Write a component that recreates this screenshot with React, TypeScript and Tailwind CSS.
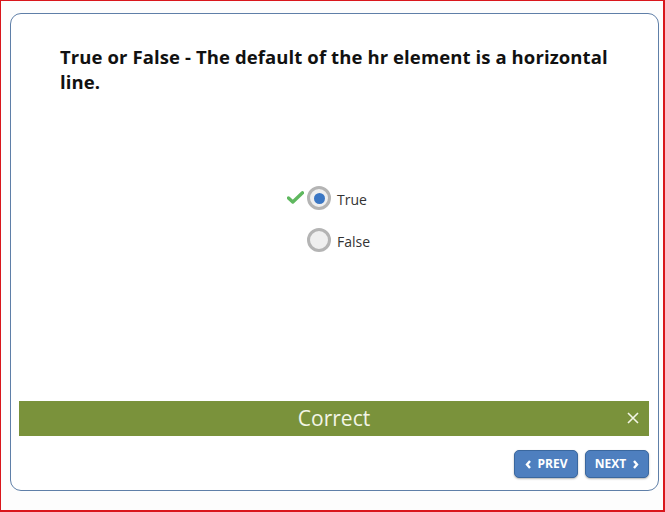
import React, { useState } from 'react';

const Chevron = ({ dir }: { dir: 'left' | 'right' }) => (
  <svg width="7" height="9" viewBox="0 0 7 9" className="inline-block">
    {dir === 'left' ? (
      <path d="M5 1 L2 4.5 L5 8" fill="none" stroke="white" strokeWidth="2.4" />
    ) : (
      <path d="M2 1 L5 4.5 L2 8" fill="none" stroke="white" strokeWidth="2.4" />
    )}
  </svg>
);

const Radio = ({ checked }: { checked: boolean }) => (
  <span className="w-[24px] h-[24px] rounded-full border-[3px] border-[#b4b4b4] bg-[#efefef] flex items-center justify-center">
    {checked && <span className="w-[11px] h-[11px] rounded-full bg-[#3b77c4]" />}
  </span>
);

const App: React.FC = () => {
  const [answer] = useState<'true' | 'false'>('true');

  return (
    <div
      className="w-[665px] h-[512px] bg-[#fdfdfd] border-t border-l border-r-2 border-b-2 border-[#d9161c] pt-[12px] pl-[9px]"
      style={{ fontFamily: '"Open Sans", sans-serif' }}
    >
      <div className="w-[649px] h-[478px] bg-white border border-[#5f7fa8] rounded-[11px] flex flex-col">
        <h1 className="pl-[49px] pr-[36px] pt-[30px] text-[18.5px] leading-[25px] font-bold text-[#111] tracking-[0.1px]">
          True or False - The default of the hr element is a horizontal line.
        </h1>

        <div className="mt-[92px] flex flex-col items-start pl-[296px] gap-[18px]">
          <div className="flex items-center h-[24px]">
            <svg width="17" height="13" viewBox="0 0 17 13" className="-ml-[20px] mr-[3px] -mt-[2px]">
              <path d="M1.5 7 L5.8 11 L15.5 1.8" fill="none" stroke="#5fb85f" strokeWidth="3.4" strokeLinecap="round" strokeLinejoin="round" />
            </svg>
            <Radio checked={answer === 'true'} />
            <span className="ml-[6px] text-[14px] text-[#333] mt-[2px]">True</span>
          </div>
          <div className="flex items-center h-[24px]">
            <Radio checked={false} />
            <span className="ml-[6px] text-[14px] text-[#333] mt-[2px]">False</span>
          </div>
        </div>

        <div className="mt-auto ml-[8px] mr-[9px] h-[35px] bg-[#7a923b] relative flex items-center justify-center">
          <span className="text-[21px] text-[#f3f5e6]">Correct</span>
          <svg width="12" height="12" viewBox="0 0 12 12" className="absolute right-[10px] top-[11px]">
            <path d="M1 1 L11 11 M11 1 L1 11" stroke="#f3f5e6" strokeWidth="1.6" />
          </svg>
        </div>

        <div className="flex justify-end gap-[7px] pr-[9px] pt-[14px] pb-[12px]">
          <button className="w-[64px] h-[28px] rounded-[5px] bg-[#4e7fbf] border border-[#3a679e] shadow-[0_1px_2px_rgba(0,0,0,0.3)] flex items-center justify-center gap-[6px] text-white text-[12px] font-bold">
            <Chevron dir="left" />
            PREV
          </button>
          <button className="w-[64px] h-[28px] rounded-[5px] bg-[#4e7fbf] border border-[#3a679e] shadow-[0_1px_2px_rgba(0,0,0,0.3)] flex items-center justify-center gap-[6px] text-white text-[12px] font-bold">
            NEXT
            <Chevron dir="right" />
          </button>
        </div>
      </div>
    </div>
  );
};

export default App;
